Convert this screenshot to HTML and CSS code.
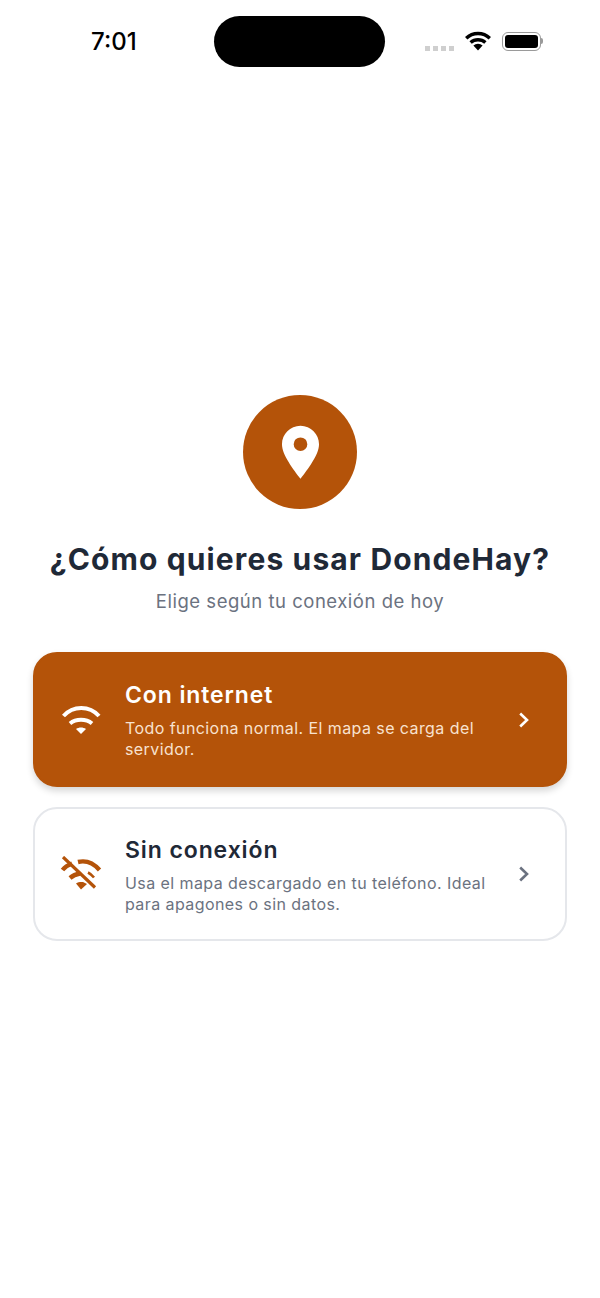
FILE: index.html
```html
<!DOCTYPE html>
<html lang="es">
<head>
  <meta charset="UTF-8">
  <meta name="viewport" content="width=device-width, initial-scale=1">
  <title>DondeHay</title>
  <link rel="stylesheet" href="styles.css">
</head>
<body>
  <!-- Status bar -->
  <header class="status-bar">
    <span class="clock">7:01</span>
    <div class="island"></div>
    <div class="status-icons">
      <div class="signal"><i></i><i></i><i></i><i></i></div>
      <svg class="status-wifi" viewBox="0 0 26 20" aria-hidden="true">
        <path d="M1.2 7.2 A17 17 0 0 1 24.8 7.2" fill="none" stroke="#000" stroke-width="3.4"/>
        <path d="M5.6 11.6 A11 11 0 0 1 20.4 11.6" fill="none" stroke="#000" stroke-width="3.4"/>
        <path d="M8.4 14.6 A6.6 6.6 0 0 1 17.6 14.6 L13 19.4 Z" fill="#000"/>
      </svg>
      <div class="battery"><div class="battery-level"></div></div>
      <div class="battery-cap"></div>
    </div>
  </header>

  <main class="chooser">
    <div class="logo">
      <svg class="logo-pin" viewBox="0 0 40 56" aria-hidden="true">
        <path fill-rule="evenodd" fill="#fff" d="M20 1 C9.500 1 1 9.500 1 20 C1 31 13 46 20 55.500 C27 46 39 31 39 20 C39 9.500 30.500 1 20 1 Z M20 13 A7 7 0 1 1 20 27 A7 7 0 1 1 20 13 Z"/>
      </svg>
    </div>
    <h1 class="title">¿Cómo quieres usar DondeHay?</h1>
    <p class="subtitle">Elige según tu conexión de hoy</p>

    <div class="options">
      <a class="option option-primary">
        <svg class="option-icon" viewBox="0 0 42 36" aria-hidden="true">
          <path d="M3.500 14 C13 3.300 29.500 3.300 39 14" fill="none" stroke="#fff" stroke-width="4"/>
          <path d="M10 21.500 C16 16.500 26 16.500 32 21.500" fill="none" stroke="#fff" stroke-width="4"/>
          <path d="M16 27 C19 25 23 25 26 27 L21 32 Z" fill="#fff"/>
        </svg>
        <div class="option-text">
          <h2 class="option-title">Con internet</h2>
          <p class="option-desc">Todo funciona normal. El mapa se carga del servidor.</p>
        </div>
        <svg class="chevron" viewBox="0 0 12 16" aria-hidden="true">
          <path d="M2.200 1.500 L9 8 L2.200 14.500" fill="none" stroke="#fff" stroke-width="2.600"/>
        </svg>
      </a>

      <a class="option">
        <svg class="option-icon" viewBox="0 0 42 36" aria-hidden="true">
          <path d="M18 6 C25 4.300 33 6.500 39.500 14" fill="none" stroke="#b45309" stroke-width="4.400"/>
          <path d="M2.500 14 C4.500 11.500 8 9 12 7.500" fill="none" stroke="#b45309" stroke-width="4.400"/>
          <path d="M10 22 C12.500 19.800 16 18.200 20 17.500" fill="none" stroke="#b45309" stroke-width="4.400"/>
          <path d="M28 16.500 C30 17.500 32 19 34 21.500" fill="none" stroke="#b45309" stroke-width="2.600"/>
          <path d="M16 27.500 C18 26 20.500 25.800 23 26 L27 28 L21 33.500 Z" fill="#b45309"/>
          <path d="M3 1 L35 31.500" fill="none" stroke="#b45309" stroke-width="3.200"/>
        </svg>
        <div class="option-text">
          <h2 class="option-title">Sin conexión</h2>
          <p class="option-desc">Usa el mapa descargado en tu teléfono. Ideal para apagones o sin datos.</p>
        </div>
        <svg class="chevron" viewBox="0 0 12 16" aria-hidden="true">
          <path d="M2.200 1.500 L9 8 L2.200 14.500" fill="none" stroke="#6b7280" stroke-width="2.600"/>
        </svg>
      </a>
    </div>
  </main>
</body>
</html>
```
FILE: styles.css
```css
/* General Page Styling */
body {
  margin: 0;
  width: 600px;
  height: 1298px;
  overflow: hidden;
  background-color: #fff;
  font-family: Inter, "Noto Sans", sans-serif;
  color: #1f2937;
}

/* Status bar */
.status-bar {
  height: 84px;
  padding-top: 16px;
  box-sizing: border-box;
  display: flex;
  align-items: flex-start;
}
.clock {
  width: 91px;
  margin-left: 91px;
  margin-right: 32px;
  margin-top: 11px;
  font-size: 24px;
  line-height: 30px;
  font-weight: 500;
  color: #000;
}
.island {
  width: 171px;
  height: 51px;
  border-radius: 26px;
  background-color: #000;
}
.status-icons {
  display: flex;
  align-items: center;
  margin-left: 40px;
  margin-top: 1px;
  height: 50px;
}
.signal {
  display: flex;
  gap: 3px;
  margin-top: 12px;
  margin-right: 11px;
}
.signal i {
  width: 5px;
  height: 5px;
  background-color: #cfcfcf;
}
.status-wifi {
  width: 26px;
  height: 20px;
  margin-right: 11px;
  margin-bottom: 3px;
}
.battery {
  width: 39px;
  height: 19px;
  box-sizing: border-box;
  padding: 2px;
  margin-bottom: 2px;
  border: 1.500px solid #9a9a9a;
  border-radius: 6px;
}
.battery-level {
  height: 100%;
  border-radius: 3px;
  background-color: #000;
}
.battery-cap {
  width: 2px;
  height: 6px;
  margin-bottom: 2px;
  background-color: #9a9a9a;
  border-radius: 0 2px 2px 0;
}

/* Main column */
.chooser {
  padding: 311px 33px 0;
  display: flex;
  flex-direction: column;
  align-items: center;
}
.logo {
  width: 114px;
  height: 114px;
  border-radius: 50%;
  background-color: #b45309;
  display: flex;
  align-items: center;
  justify-content: center;
}
.logo-pin {
  width: 39px;
  height: 56px;
}
.title {
  margin: 30px -20px 0;
  font-size: 30px;
  line-height: 40px;
  font-weight: 700;
  letter-spacing: 1.120px;
  white-space: nowrap;
  color: #1f2937;
}
.subtitle {
  margin: 10px 0 0;
  font-size: 18.500px;
  line-height: 24px;
  letter-spacing: 0.520px;
  color: #6b7280;
}

/* Option cards */
.options {
  align-self: stretch;
  margin-top: 39px;
  display: flex;
  flex-direction: column;
  gap: 20px;
}
.option {
  height: 134px;
  box-sizing: border-box;
  display: flex;
  align-items: center;
  padding: 0 35px 0 25px;
  border: 2px solid #e5e7eb;
  border-radius: 24px;
  background-color: #fff;
}
.option-primary {
  height: 135px;
  border-color: #b45309;
  background-color: #b45309;
  box-shadow: 0 4px 7px rgba(0, 0, 0, 0.16);
}
.option-icon {
  flex: none;
  width: 42px;
  height: 36px;
  margin-right: 23px;
}
.option-text {
  flex: 1;
  padding-top: 2px;
}
.option-title {
  margin: 0;
  font-size: 23px;
  line-height: 28px;
  font-weight: 600;
  letter-spacing: 0.900px;
  color: #1f2937;
}
.option-desc {
  margin: 9px 0 0;
  font-size: 16px;
  line-height: 21px;
  letter-spacing: 0.420px;
  color: #6b7280;
}
.option-primary .option-title {
  color: #fff;
}
.option-primary .option-desc {
  color: #f8e2d0;
}
.chevron {
  flex: none;
  width: 12px;
  height: 16px;
  margin-left: 26px;
}
```
